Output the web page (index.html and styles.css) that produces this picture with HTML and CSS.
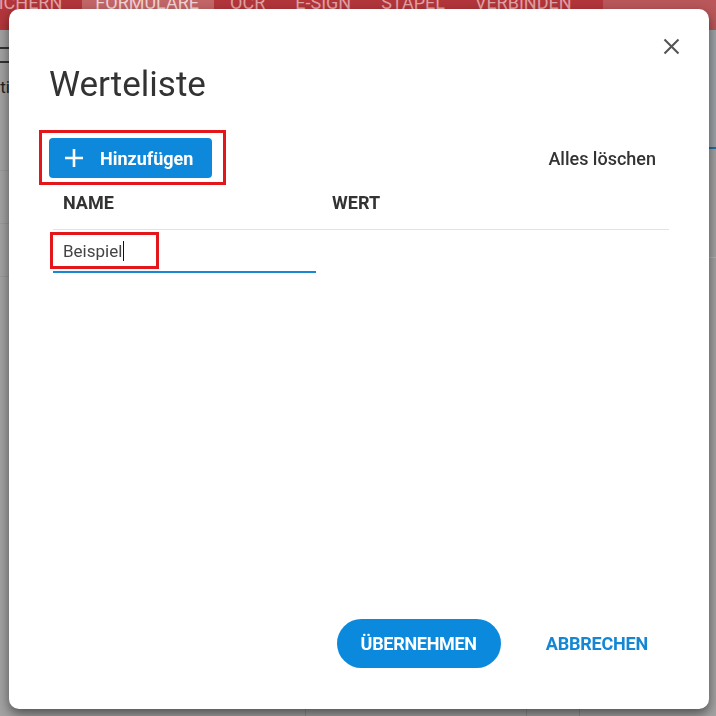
FILE: index.html
```html
<!DOCTYPE html>
<html lang="de">
<head>
    <meta charset="UTF-8">
    <meta name="viewport" content="width=device-width, initial-scale=1.0">
    <title>Werteliste</title>
    <link rel="stylesheet" href="styles.css">
</head>
<body>

<div class="app">
    <nav class="tabbar">
        <span class="tab tab-first">SICHERN</span>
        <span class="tab active">FORMULARE</span>
        <span class="tab">OCR</span>
        <span class="tab">E-SIGN</span>
        <span class="tab">STAPEL</span>
        <span class="tab">VERBINDEN</span>
        <span class="tabbar-rest"></span>
    </nav>
    <div class="workspace">
        <aside class="sidebar">
            <div class="sidebar-tool"><span class="tool-icon"></span></div>
            <div class="sidebar-label">Optionen</div>
            <div class="sidebar-row"></div>
            <div class="sidebar-row"></div>
            <div class="sidebar-row"></div>
        </aside>
        <div class="col"></div>
        <div class="col"></div>
        <section class="panel">
            <div class="panel-tabs"></div>
            <div class="panel-row"></div>
            <div class="panel-text">hinzufügen</div>
        </section>
    </div>
</div>

<!-- Dialog Werteliste -->
<div class="overlay">
    <div class="dialog">
        <button class="close" type="button" aria-label="Schließen">
            <svg width="17" height="17" viewBox="0 0 17 17"><path d="M1.5 1.5 15.5 15.5M15.5 1.5 1.5 15.5" stroke="#555" stroke-width="2.1" fill="none"/></svg>
        </button>
        <h1 class="dialog-title">Werteliste</h1>

        <div class="list-actions">
            <div class="marked">
                <button class="btn-add" type="button">
                    <svg width="18" height="18" viewBox="0 0 18 18"><path d="M9 0v18M0 9h18" stroke="#fff" stroke-width="2.6" fill="none"/></svg>
                    Hinzufügen
                </button>
                <span class="mark mark-add"></span>
            </div>
            <button class="btn-text" type="button">Alles löschen</button>
        </div>

        <div class="values">
            <div class="values-head">
                <div class="cell">NAME</div>
                <div class="cell">WERT</div>
            </div>
            <div class="values-row">
                <div class="field">
                    <span>Beispiel</span><span class="caret"></span>
                    <span class="mark mark-field"></span>
                </div>
                <div></div>
            </div>
        </div>

        <div class="dialog-actions">
            <button class="btn-primary" type="button">ÜBERNEHMEN</button>
            <button class="btn-cancel" type="button">ABBRECHEN</button>
        </div>
    </div>
</div>

</body>
</html>
```

FILE: styles.css
```css
body {
    margin: 0;
    font-family: Roboto, "Liberation Sans", sans-serif;
    background-color: #a3a3a3;
    height: 716px;
    overflow: hidden;
}
button {
    font-family: inherit;
    border: none;
    cursor: pointer;
}

/* app behind the dialog */
.app {
    height: 716px;
    display: flex;
    flex-direction: column;
}
.tabbar {
    margin-top: -12px;
    height: 42px;
    flex: none;
    display: flex;
    gap: 2px;
    background-color: #b2363b;
    overflow: hidden;
}
.tab {
    padding: 4px 14px 0;
    font-size: 18px;
    line-height: 21px;
    color: #e2a2a4;
    white-space: nowrap;
}
.tab-first {
    margin-left: -26px;
    margin-right: 4px;
}
.tab.active {
    padding: 4px 15px 0 13px;
    background-color: #c36668;
    color: #f0d2d2;
}
.tabbar-rest {
    margin-left: auto;
    width: 113px;
    background-color: #b9575a;
}
.workspace {
    flex: 1;
    display: grid;
    grid-template-columns: 306px 221px 53px 1fr;
}
.sidebar, .col {
    border-right: 1px solid #8f8f8f;
}
.sidebar-tool {
    padding: 17px 0 0 0;
    height: 30px;
    box-sizing: border-box;
}
.tool-icon {
    display: block;
    width: 10px;
    height: 12px;
    margin-left: -3px;
    border: 2px solid #333;
}
.sidebar-label {
    margin: 17px 0 0 -21px;
    font-size: 17px;
    color: #222;
    height: 41px;
}
.sidebar-row {
    height: 52px;
    border-bottom: 1px solid #999;
}
.panel-tabs {
    height: 117px;
    border-bottom: 2px solid #1f6fa8;
    background-color: #9fa4a8;
}
.panel-row {
    height: 108px;
    border-bottom: 1px solid #b4b4b4;
}
.panel-text {
    margin: 34px 0 0 180px;
    font-size: 17px;
    color: #222;
    white-space: nowrap;
}

/* dialog */
.overlay {
    position: fixed;
    top: 0;
    left: 0;
    right: 0;
    bottom: 0;
    padding: 9px;
}
.dialog {
    position: relative;
    width: 700px;
    height: 700px;
    box-sizing: border-box;
    padding: 56px 40px 41px 40px;
    display: flex;
    flex-direction: column;
    background-color: #fff;
    border-radius: 10px;
    box-shadow: 0 5px 12px rgba(0, 0, 0, 0.5);
}
.close {
    position: absolute;
    top: 29px;
    right: 29px;
    padding: 0;
    width: 17px;
    height: 17px;
    background: none;
}
.close svg {
    display: block;
}
.dialog-title {
    margin: 0;
    font-size: 35px;
    line-height: 40px;
    font-weight: 400;
    color: #333;
}
.list-actions {
    margin-top: 33px;
    display: flex;
    justify-content: space-between;
    align-items: center;
}
.marked {
    position: relative;
}
.mark {
    position: absolute;
    box-sizing: border-box;
    border: 3px solid #e3161b;
}
.mark-add {
    top: -8px;
    left: -10px;
    right: -14px;
    bottom: -7px;
}
.btn-add {
    display: flex;
    align-items: center;
    gap: 17px;
    height: 40px;
    padding: 0 19px 0 16px;
    background-color: #0e88da;
    color: #fff;
    font-size: 18px;
    font-weight: 700;
    border-radius: 4px;
}
.btn-add svg {
    display: block;
}
.btn-text {
    padding: 0 13px;
    background: none;
    color: #333;
    font-size: 18px;
    font-weight: 500;
}
.values {
    margin-left: 4px;
}
.values-head, .values-row {
    display: grid;
    grid-template-columns: 269px 1fr;
}
.values-head {
    padding: 15px 0 16px;
    border-bottom: 1px solid #e3e3e3;
}
.cell {
    padding-left: 10px;
    font-size: 18px;
    line-height: 20px;
    font-weight: 700;
    color: #333;
}
.field {
    position: relative;
    width: 263px;
    height: 43px;
    box-sizing: border-box;
    padding: 0 10px;
    display: flex;
    align-items: center;
    border-bottom: 2px solid #1a87d2;
    font-size: 17px;
    color: #444;
}
.caret {
    width: 1px;
    height: 20px;
    margin-left: 1px;
    background-color: #111;
}
.mark-field {
    top: 2px;
    left: -3px;
    width: 109px;
    height: 37px;
}
.dialog-actions {
    margin-top: auto;
    display: flex;
    justify-content: flex-end;
    align-items: center;
    gap: 24px;
}
.btn-primary {
    height: 49px;
    padding: 0 24px;
    border-radius: 25px;
    background-color: #0b89dd;
    color: #fff;
    font-size: 18px;
    font-weight: 700;
    letter-spacing: -0.3px;
}
.btn-cancel {
    padding: 0 21px;
    background: none;
    color: #1486d4;
    font-size: 18px;
    font-weight: 700;
    letter-spacing: -0.2px;
}
```
